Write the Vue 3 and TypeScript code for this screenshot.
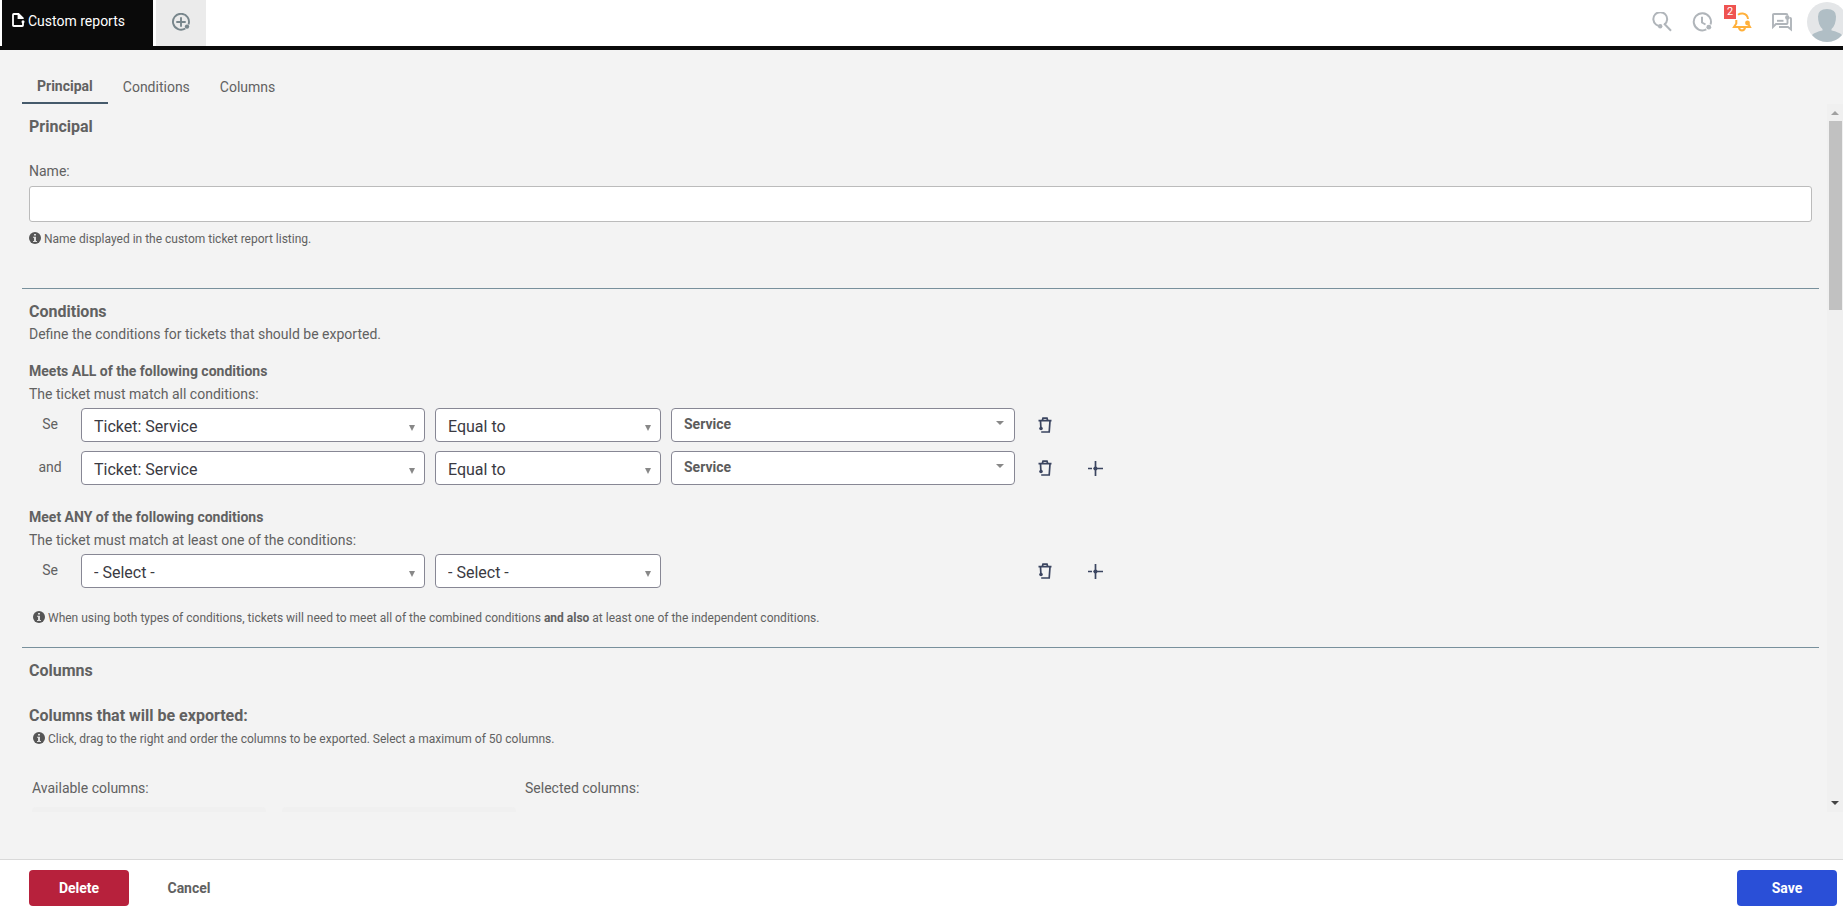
<script setup lang="ts">
import { ref } from 'vue'

interface Condition {
  id: string
  prefix: string
  field: string
  operator: string
  value: string | null
  canAdd: boolean
}

interface Group {
  title: string
  text: string
  rows: Condition[]
}

const tabs = ['Principal', 'Conditions', 'Columns']
const activeTab = ref('Principal')
const name = ref('')

const groups = ref<Group[]>([
  {
    title: 'Meets ALL of the following conditions',
    text: 'The ticket must match all conditions:',
    rows: [
      { id: 'all-1', prefix: 'Se', field: 'Ticket: Service', operator: 'Equal to', value: 'Service', canAdd: false },
      { id: 'all-2', prefix: 'and', field: 'Ticket: Service', operator: 'Equal to', value: 'Service', canAdd: true },
    ],
  },
  {
    title: 'Meet ANY of the following conditions',
    text: 'The ticket must match at least one of the conditions:',
    rows: [
      { id: 'any-1', prefix: 'Se', field: '- Select -', operator: '- Select -', value: null, canAdd: true },
    ],
  },
])

const fields = ['- Select -', 'Ticket: Service']
const operators = ['- Select -', 'Equal to']
</script>

<template>
  <div class="page">
    <header class="topbar">
      <a class="report-tab" href="#">
        <svg width="13" height="14" viewBox="0 0 13 14" fill="none" stroke="currentColor" stroke-width="1.8">
          <path d="M11 10v2.200q0 .8-.8.8H1.800q-.8 0-.8-.8V1.800Q1 1 1.800 1H6.500L10.800 5.200V6" />
          <path d="M6.500 1v4.200h4.300" />
          <path d="M6.500 1v4.200h4.300z" fill="currentColor" stroke="none" />
          <circle cx="11" cy="8.700" r="1.500" fill="currentColor" stroke="none" />
        </svg>
        <span>Custom reports</span>
      </a>
      <button class="new-tab" type="button" aria-label="New tab">
        <svg width="18" height="18" viewBox="0 0 18 18" fill="none" stroke="currentColor" stroke-width="1.9">
          <path d="M13.300 15.500A8 8 0 1 1 16.500 11.500" />
          <path d="M9 4.300v9.400M4.300 9h9.400" />
          <circle cx="15" cy="13.600" r="2.200" fill="currentColor" stroke="none" />
        </svg>
      </button>
      <nav class="tools" aria-label="Tools">
        <button type="button" aria-label="Search">
          <svg width="20" height="20" viewBox="0 0 20 20" fill="none" stroke="currentColor" stroke-width="2">
            <path d="M7.500 14.500L4 12.500A6.900 6.900 0 1 1 12.500 12.500" />
            <path d="M12 11.500l7 7.300" />
            <circle cx="8.200" cy="14.300" r="2.200" fill="currentColor" stroke="none" />
          </svg>
        </button>
        <button type="button" aria-label="History">
          <svg width="20" height="20" viewBox="0 0 20 20" fill="none" stroke="currentColor" stroke-width="2">
            <path d="M14.300 17.400A8.600 8.600 0 1 1 18.500 12.500" />
            <path d="M10 4.800v5.700l3.500 2" />
            <circle cx="16.800" cy="15.200" r="2.400" fill="currentColor" stroke="none" />
          </svg>
        </button>
        <button class="alerts" type="button" aria-label="Notifications, 2 new">
          <svg width="20" height="20" viewBox="0 0 20 20" fill="none" stroke="currentColor" stroke-width="2">
            <path d="M6 2.700Q8 1.300 10.800 1.500Q15.500 2.300 16 7M4.300 8v3.500L2 15h16l-1.700-3" />
            <path d="M6.800 15.300Q7.500 18.500 10 18.500T13.200 15.300" />
            <circle cx="15.500" cy="11" r="2.400" fill="currentColor" stroke="none" />
          </svg>
          <span class="badge">2</span>
        </button>
        <button type="button" aria-label="Messages">
          <svg width="20" height="20" viewBox="0 0 20 20" fill="none" stroke="currentColor" stroke-width="1.9">
            <path d="M15.500 3.500Q15.500 2 14 2H2Q1 2 1 3V15L4 12h10.500Q15.500 12 15.500 11V6" />
            <path d="M17.500 6h.7q.8 0 .8.800V17.500l-3-2.500H7" />
            <path d="M5 8.800h6.500" />
            <circle cx="15.300" cy="5.500" r="2.200" fill="currentColor" stroke="none" />
          </svg>
        </button>
      </nav>
      <a class="avatar" href="#" aria-label="Profile">
        <svg width="40" height="40" viewBox="0 0 40 40">
          <circle cx="20" cy="20" r="20" fill="#e4e6e8" />
          <path d="M5 33Q8 30 15.500 28.500V27Q11 23 11 14.500Q11 7 20 7T29 14.500Q29 23 24.500 27V28.500Q32 30 35 33Q29 40 20 40T5 33Z" fill="#b0bec5" />
        </svg>
      </a>
    </header>

    <nav class="tabs" aria-label="Sections">
      <button
        v-for="tab in tabs"
        :key="tab"
        type="button"
        :class="{ active: tab === activeTab }"
        @click="activeTab = tab"
      >{{ tab }}</button>
    </nav>

    <div class="viewport">
      <main class="content">
        <section class="section first">
          <h2>Principal</h2>
          <label class="name-label" for="report-name">Name:</label>
          <input id="report-name" v-model="name" class="name-input" type="text" />
          <p class="hint">
            <svg class="info" width="12" height="12" viewBox="0 0 12 12">
              <circle cx="6" cy="6" r="6" fill="#555" />
              <path d="M5 2h2v1.500H5zM4 4.700h3V9h1v1H4V9h1V5.700H4z" fill="#ddd" />
            </svg>
            <span>Name displayed in the custom ticket report listing.</span>
          </p>
        </section>

        <section class="section conditions">
          <h2>Conditions</h2>
          <p class="text">Define the conditions for tickets that should be exported.</p>
          <div v-for="group in groups" :key="group.title" class="group">
            <h3>{{ group.title }}</h3>
            <p class="text">{{ group.text }}</p>
            <div class="rows">
              <div v-for="row in group.rows" :key="row.id" class="row">
                <label class="prefix" :for="row.id">{{ row.prefix }}</label>
                <div class="picker">
                  <select :id="row.id" v-model="row.field">
                    <option v-for="item in fields" :key="item">{{ item }}</option>
                  </select>
                  <svg class="arrow" width="6" height="6" viewBox="0 0 6 6"><path d="M0 0h6L3 6z" fill="#888" /></svg>
                </div>
                <div class="picker">
                  <select v-model="row.operator" aria-label="Operator">
                    <option v-for="item in operators" :key="item">{{ item }}</option>
                  </select>
                  <svg class="arrow" width="6" height="6" viewBox="0 0 6 6"><path d="M0 0h6L3 6z" fill="#888" /></svg>
                </div>
                <div v-if="row.value" class="picker value">
                  <select v-model="row.value" aria-label="Value">
                    <option>Service</option>
                  </select>
                  <svg class="arrow" width="8" height="4" viewBox="0 0 8 4"><path d="M0 0h8L4 4z" fill="#888" /></svg>
                </div>
                <span v-else></span>
                <button class="action" type="button" aria-label="Remove condition">
                  <svg width="14" height="16" viewBox="0 0 14 16" fill="none" stroke="currentColor" stroke-width="1.700">
                    <path d="M.5 3.700h13M4.300 3.500L5 1.200h4l.7 2.300M2.500 4l.4 7M12 4l-.8 11H3.200" />
                    <circle cx="3" cy="11.500" r="1.800" fill="currentColor" stroke="none" />
                  </svg>
                </button>
                <button v-if="row.canAdd" class="action" type="button" aria-label="Add condition">
                  <svg width="15" height="15" viewBox="0 0 15 15" fill="none" stroke="currentColor" stroke-width="1.700">
                    <path d="M7.500 0v15M0 7.500h4M5.500 7.500H15" />
                    <circle cx="7.500" cy="7.500" r="2" fill="currentColor" stroke="none" />
                  </svg>
                </button>
              </div>
            </div>
          </div>
          <p class="hint indented">
            <svg class="info" width="12" height="12" viewBox="0 0 12 12">
              <circle cx="6" cy="6" r="6" fill="#555" />
              <path d="M5 2h2v1.500H5zM4 4.700h3V9h1v1H4V9h1V5.700H4z" fill="#ddd" />
            </svg>
            <span>When using both types of conditions, tickets will need to meet all of the combined conditions <b>and also</b> at least one of the independent conditions.</span>
          </p>
        </section>

        <section class="section columns">
          <h2>Columns</h2>
          <h2 class="export-title">Columns that will be exported:</h2>
          <p class="hint indented">
            <svg class="info" width="12" height="12" viewBox="0 0 12 12">
              <circle cx="6" cy="6" r="6" fill="#555" />
              <path d="M5 2h2v1.500H5zM4 4.700h3V9h1v1H4V9h1V5.700H4z" fill="#ddd" />
            </svg>
            <span>Click, drag to the right and order the columns to be exported. Select a maximum of 50 columns.</span>
          </p>
          <div class="lists">
            <div class="available">
              <p class="text">Available columns:</p>
              <div class="cards">
                <div class="card"></div>
                <div class="card"></div>
              </div>
            </div>
            <p class="text">Selected columns:</p>
          </div>
        </section>
      </main>
      <div class="scrollbar" aria-hidden="true">
        <svg width="8" height="4" viewBox="0 0 8 4"><path d="M0 4h8L4 0z" fill="#a0a0a0" /></svg>
        <div class="track"><div class="thumb"></div></div>
        <svg width="8" height="4" viewBox="0 0 8 4"><path d="M0 0h8L4 4z" fill="#444" /></svg>
      </div>
    </div>

    <footer class="footer">
      <button class="btn delete" type="button">Delete</button>
      <button class="btn cancel" type="button">Cancel</button>
      <button class="btn save" type="button">Save</button>
    </footer>
  </div>
</template>

<style>
body {
  margin: 0;
}
</style>

<style scoped>
.page {
  display: flex;
  flex-direction: column;
  height: 100vh;
  overflow: hidden;
  background: #f3f3f3;
  color: #616161;
  font: 14px/20px Roboto, "Open Sans", sans-serif;
}
h2, h3, p {
  margin: 0;
}
button {
  padding: 0;
  border: 0;
  background: none;
  color: inherit;
  font: inherit;
  cursor: pointer;
}
svg {
  display: block;
  flex: none;
}

/* Top bar */
.topbar {
  display: flex;
  flex: none;
  height: 46px;
  padding-left: 2px;
  border-bottom: 4px solid #0a0a0a;
  background: #fff;
  overflow: hidden;
}
.report-tab {
  display: flex;
  gap: 3px;
  box-sizing: border-box;
  width: 151px;
  padding: 11px 0 0 10px;
  background: #0a0a0a;
  color: #fff;
  text-decoration: none;
}
.report-tab svg {
  margin-top: 2px;
}
.new-tab {
  display: flex;
  align-items: center;
  justify-content: center;
  width: 50px;
  height: 44px;
  margin-left: 3px;
  background: #ebebeb;
  box-shadow: 0 2px #ebebeb;
  color: #78868c;
}
.tools {
  display: flex;
  margin-left: auto;
}
.tools button {
  position: relative;
  display: flex;
  align-items: center;
  justify-content: center;
  width: 40px;
  height: 44px;
  color: #b0b5ba;
}
.tools .alerts {
  color: #ffb03b;
}
.badge {
  position: absolute;
  top: 5px;
  left: 2px;
  width: 12px;
  background: #ef5350;
  color: #fff;
  font-size: 11px;
  line-height: 14px;
}
.avatar {
  margin: 2px -4px 0 5px;
}

/* Section tabs */
.tabs {
  display: flex;
  flex: none;
  height: 42px;
  padding: 12px 0 0 22px;
}
.tabs button {
  box-sizing: border-box;
  height: 42px;
  padding: 12px 15px 2px;
  border-bottom: 2px solid transparent;
}
.tabs .active {
  padding-bottom: 4px;
  border-bottom-color: #455a6b;
  font-weight: 700;
}

/* Scrolling form */
.viewport {
  display: flex;
  flex: 1;
  min-height: 0;
  margin-bottom: 47px;
}
.content {
  flex: 1;
  min-width: 0;
  padding: 0 8px 0 22px;
  overflow-y: auto;
  scrollbar-width: none;
}
.section {
  padding: 12px 7px 0;
  border-top: 1px solid #78909c;
}
.section.first {
  padding-bottom: 38px;
  border-top: 0;
}
.section.conditions {
  padding-bottom: 18px;
}
h2 {
  font-size: 16px;
  line-height: 22px;
  font-weight: 700;
}
h3 {
  font-size: 14px;
  font-weight: 700;
}
h2 + .text {
  margin-top: 1px;
}
h3 + .text {
  margin-top: 3px;
}
.name-label {
  display: block;
  margin-top: 23px;
}
.name-input {
  display: block;
  box-sizing: border-box;
  width: 100%;
  height: 36px;
  margin-top: 5px;
  padding: 0 12px;
  border: 1px solid #bbb;
  border-radius: 3px;
  background: #fff;
  color: #333;
  font: inherit;
}
.hint {
  display: flex;
  gap: 3px;
  margin-top: 6px;
  font-size: 12px;
  line-height: 22px;
}
.info {
  margin-top: 4px;
}
.indented {
  margin-left: 4px;
}
.group {
  margin-top: 17px;
}
.group + .group {
  margin-top: 22px;
}
.rows {
  display: flex;
  flex-direction: column;
  gap: 9px;
  margin-top: 4px;
}
.row {
  display: grid;
  grid-template-columns: 42px 344px 226px 344px 40px 40px;
  gap: 10px;
}
.prefix {
  line-height: 32px;
  text-align: center;
}
.picker {
  position: relative;
}
.picker select {
  display: block;
  appearance: none;
  box-sizing: border-box;
  width: 100%;
  height: 34px;
  padding: 4px 24px 0 12px;
  border: 1px solid #878794;
  border-radius: 4px;
  background: #fff;
  color: #3a3a42;
  font: 16px/20px Roboto, "Open Sans", sans-serif;
}
.picker.value select {
  padding: 0 24px 2px 12px;
  color: #5c5c5c;
  font-size: 14px;
  font-weight: 700;
}
.arrow {
  position: absolute;
  top: 17px;
  right: 10px;
  pointer-events: none;
}
.value .arrow {
  top: 13px;
  right: 11px;
}
.action {
  display: flex;
  align-items: center;
  justify-content: center;
  color: #3b4560;
}
.conditions > .hint {
  margin-top: 19px;
}
.export-title {
  margin-top: 23px;
}
.columns > .hint {
  margin-top: 1px;
}
.lists {
  display: flex;
  gap: 9px;
  margin: 28px 0 0 3px;
}
.cards {
  display: flex;
  gap: 16px;
  margin-top: 9px;
}
.card {
  flex: 1;
  height: 520px;
  border-radius: 4px;
  background: #f0f0f0;
}
.available {
  flex: none;
  width: 484px;
}
.scrollbar {
  display: flex;
  flex-direction: column;
  align-items: center;
  justify-content: space-between;
  box-sizing: border-box;
  width: 16px;
  padding: 7px 0;
  background: #f0f0f0;
}
.track {
  flex: 1;
  width: 13px;
  margin: 6px 0;
}
.thumb {
  height: 28%;
  background: #c1c1c1;
}

/* Footer actions */
.footer {
  display: flex;
  flex: none;
  padding: 10px 6px 5px 29px;
  border-top: 1px solid #d9d9d9;
  background: #fff;
}
.btn {
  width: 100px;
  height: 36px;
  border-radius: 4px;
  font-weight: 700;
}
.delete {
  background: #b7213c;
  color: #fff;
}
.cancel {
  margin-left: 10px;
}
.save {
  margin-left: auto;
  background: #2a4fd7;
  color: #fff;
}
</style>
